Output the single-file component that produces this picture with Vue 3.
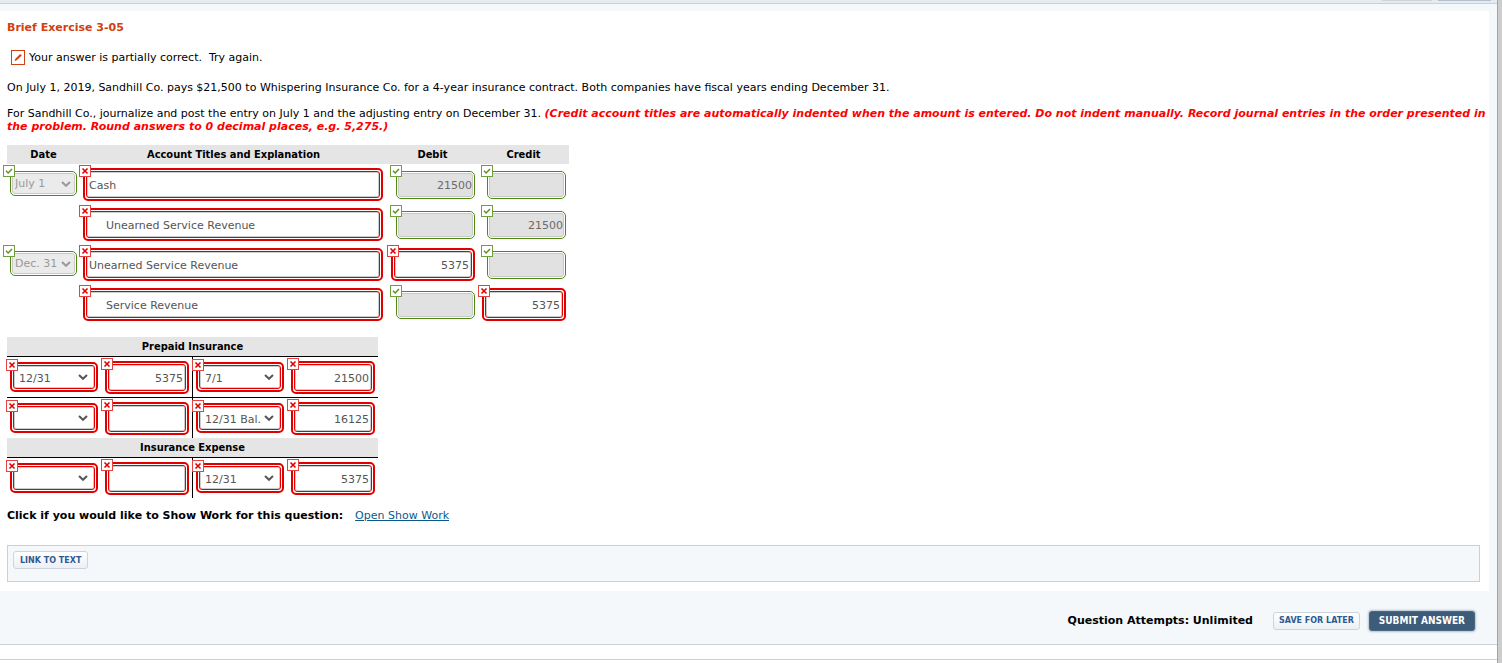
<script setup>
import { h } from 'vue'

const journal = [
  {
    date: 'July 1',
    title: { value: 'Cash' },
    debit: { value: '21500', ok: true },
    credit: { value: '', ok: true },
  },
  {
    title: { value: 'Unearned Service Revenue', indent: true },
    debit: { value: '', ok: true },
    credit: { value: '21500', ok: true },
  },
  {
    date: 'Dec. 31',
    title: { value: 'Unearned Service Revenue' },
    debit: { value: '5375', ok: false },
    credit: { value: '', ok: true },
  },
  {
    title: { value: 'Service Revenue', indent: true },
    debit: { value: '', ok: true },
    credit: { value: '5375', ok: false },
  },
]

const accounts = [
  {
    name: 'Prepaid Insurance',
    rows: [
      ['12/31', '5375', '7/1', '21500'],
      ['', '', '12/31 Bal.', '16125'],
    ],
  },
  { name: 'Insurance Expense', rows: [['', '', '12/31', '5375']] },
]

const columns = ['Debit date', 'Debit amount', 'Credit date', 'Credit amount']

const Mark = (props) =>
  h('svg', { class: 'mark', viewBox: '0 0 12 12', 'aria-hidden': 'true' }, [
    h('rect', { x: 0.5, y: 0.5, width: 11, height: 11, fill: '#fff', stroke: props.ok ? '#6fa03c' : '#e8413f' }),
    props.ok
      ? h('path', { d: 'M3 5.8 5.2 8 9 4', fill: 'none', stroke: '#5b9420', 'stroke-width': 1.5 })
      : h('path', { d: 'M3.5 3.5 8.5 8.5M8.5 3.5 3.5 8.5', fill: 'none', stroke: '#e00000', 'stroke-width': 1.6 }),
  ])
Mark.props = { ok: Boolean }

const Chevron = () =>
  h('svg', { class: 'chevron', viewBox: '0 0 10 6', 'aria-hidden': 'true' }, [
    h('path', { d: 'M1 1 5 4.8 9 1', fill: 'none', stroke: 'currentColor', 'stroke-width': 2 }),
  ])
</script>

<template>
  <div class="page">
    <div class="body">
      <div class="strip"><span class="tab"></span><span class="tab dark"></span></div>
      <main class="frame">
        <section class="panel">
          <h1>Brief Exercise 3-05</h1>
          <p class="status">
            <svg class="pencil" viewBox="0 0 14 15" aria-hidden="true">
              <rect x="0.5" y="0.5" width="13" height="14" fill="#fff" stroke="#d14010" />
              <path d="M3.6 11 4.2 9 9.2 4 10.8 5.4 5.7 10.3Z" fill="#d14010" />
            </svg>
            <span>Your answer is partially correct.&nbsp; Try again.</span>
          </p>
          <p class="intro">On July 1, 2019, Sandhill Co. pays $21,500 to Whispering Insurance Co. for a 4-year insurance contract. Both companies have fiscal years ending December 31.</p>
          <p class="task">For Sandhill Co., journalize and post the entry on July 1 and the adjusting entry on December 31. <em>(Credit account titles are automatically indented when the amount is entered. Do not indent manually. Record journal entries in the order presented in the problem. Round answers to 0 decimal places, e.g. 5,275.)</em></p>

          <table class="journal">
            <colgroup><col class="c-date" /><col class="c-title" /><col class="c-amt" /><col class="c-amt" /></colgroup>
            <thead>
              <tr><th>Date</th><th>Account Titles and Explanation</th><th>Debit</th><th>Credit</th></tr>
            </thead>
            <tbody>
              <tr v-for="(row, i) in journal" :key="i">
                <td>
                  <span v-if="row.date" class="field ok pick">
                    <select disabled :aria-label="`Date, line ${i + 1}`"><option>{{ row.date }}</option></select>
                    <Chevron />
                    <Mark :ok="true" />
                  </span>
                </td>
                <td>
                  <span class="field bad" :class="{ indent: row.title.indent }">
                    <input type="text" :value="row.title.value" :aria-label="`Account title, line ${i + 1}`" />
                    <Mark />
                  </span>
                </td>
                <td v-for="side in ['debit', 'credit']" :key="side">
                  <span class="field amount" :class="row[side].ok ? 'ok' : 'bad'">
                    <input type="text" :value="row[side].value" :disabled="row[side].ok" :aria-label="`${side}, line ${i + 1}`" />
                    <Mark :ok="row[side].ok" />
                  </span>
                </td>
              </tr>
            </tbody>
          </table>

          <table class="ledger">
            <colgroup><col class="l-date" /><col class="l-left" /><col class="l-date" /><col class="l-right" /></colgroup>
            <tbody v-for="acc in accounts" :key="acc.name">
              <tr><th colspan="4">{{ acc.name }}</th></tr>
              <tr v-for="(row, r) in acc.rows" :key="r">
                <td v-for="(cell, c) in row" :key="c">
                  <span class="field bad" :class="c % 2 ? 'amount' : 'pick'">
                    <input v-if="c % 2" type="text" :value="cell" :aria-label="`${acc.name}, ${columns[c]}, line ${r + 1}`" />
                    <template v-else>
                      <select :aria-label="`${acc.name}, ${columns[c]}, line ${r + 1}`"><option>{{ cell }}</option></select>
                      <Chevron />
                    </template>
                    <Mark />
                  </span>
                </td>
              </tr>
            </tbody>
          </table>

          <p class="work"><strong>Click if you would like to Show Work for this question:</strong><a href="#">Open Show Work</a></p>

          <div class="links"><button type="button" class="btn">LINK TO TEXT</button></div>
        </section>
        <footer class="actions">
          <strong>Question Attempts: Unlimited</strong>
          <button type="button" class="btn save">SAVE FOR LATER</button>
          <button type="button" class="btn submit">SUBMIT ANSWER</button>
        </footer>
      </main>
      <div class="below"></div>
    </div>
    <div class="edge"></div>
  </div>
</template>

<style>
body {
  margin: 0;
  background: #fff;
}
</style>

<style scoped>
.page {
  display: flex;
  min-height: 100vh;
  font: 11px/13px Verdana, "DejaVu Sans", sans-serif;
  color: #000;
}
.page :deep(*) {
  box-sizing: border-box;
}
.body {
  flex: 1;
  min-width: 0;
}
.edge {
  width: 5px;
  background: #cdcdcd;
  border-left: 1px solid #a3a3a3;
}
.strip {
  height: 4px;
  background: #e6ebf0;
  border-bottom: 1px solid #c8d0da;
  display: flex;
  justify-content: flex-end;
  gap: 6px;
  padding-right: 6px;
}
.tab {
  width: 50px;
  height: 1px;
  background: #ccd3dc;
}
.tab.dark {
  width: 53px;
  background: #b3c1cf;
}
.frame {
  background: #f4f8fb;
  border-bottom: 1px solid #c8d0da;
  padding-top: 7px;
}
.panel {
  background: #fff;
  margin-right: 8px;
  padding: 10px 0 9px 7px;
}
h1 {
  margin: 0 0 15px;
  font-size: 11px;
  line-height: 13px;
  color: #d14010;
}
p {
  margin: 0;
}
.status {
  display: flex;
  align-items: center;
  gap: 4px;
  height: 16px;
  margin: 0 0 16px 4px;
}
.pencil {
  width: 14px;
  height: 15px;
}
.intro {
  margin-bottom: 13px;
}
.task {
  margin-bottom: 12px;
}
.task em {
  font-weight: bold;
  color: #f00;
}
table {
  table-layout: fixed;
  border-collapse: separate;
  border-spacing: 0;
}
.journal {
  width: 562px;
  margin-bottom: 13px;
}
.c-date { width: 73px; }
.c-title { width: 307px; }
.c-amt { width: 91px; }
th {
  height: 19px;
  padding: 0;
  background: #e5e5e5;
  font: bold 11px/13px Tahoma, "DejaVu Sans Condensed", "DejaVu Sans", sans-serif;
  text-align: center;
}
td {
  height: 40px;
  padding: 4px 3px 3px;
  vertical-align: top;
}
.field {
  display: block;
  position: relative;
  background: #fff;
}
.field.bad {
  height: 33px;
  padding: 1px;
  border: 2px solid #e00000;
  border-radius: 5px;
}
.field.ok {
  height: 28px;
  margin-top: 3px;
  padding: 1px;
  border: 1px solid #4f8a10;
  border-radius: 5px;
}
.journal td:nth-child(2) .field {
  width: 300px;
}
.field.amount.bad {
  width: 84px;
  margin-left: auto;
}
.field.amount.ok {
  width: 79px;
  margin-left: auto;
}
.field.pick.ok {
  height: 25px;
}
.field.pick.bad {
  width: 88px;
  height: 30px;
  margin-top: 1px;
}
input,
select {
  display: block;
  width: 100%;
  height: 100%;
  margin: 0;
  padding: 0 2px;
  font: inherit;
  color: #555;
  background: #fff;
  border: 1px solid #c9c9c9;
  border-radius: 3px;
  appearance: none;
  opacity: 1;
}
.bad input,
.bad select {
  border-color: #e00000;
  box-shadow: inset 0 0 0 1px #ccc;
}
.bad input {
  padding: 2px 2px 0;
}
.amount input {
  text-align: right;
}
.amount.ok input {
  background: #e1e1e1;
  color: #6a6a6a;
  padding-right: 0;
}
.indent input {
  padding-left: 19px;
}
.bad select {
  padding: 2px 0 0 5px;
}
.ok select {
  background: #ebebeb;
  color: #999;
}
.field :deep(.chevron) {
  position: absolute;
  right: 8px;
  top: 50%;
  width: 10px;
  height: 6px;
  margin-top: -3px;
  color: #555;
  pointer-events: none;
}
.ok :deep(.chevron) {
  right: 5px;
  color: #999;
}
.field :deep(.mark) {
  position: absolute;
  left: -6px;
  top: -5px;
  width: 12px;
  height: 12px;
}
.ok :deep(.mark) {
  left: -7px;
  top: -7px;
}
.ok.pick :deep(.mark) {
  left: -8px;
}
.ledger {
  width: 371px;
}
.l-date { width: 95px; }
.l-left { width: 91px; }
.l-right { width: 90px; }
.ledger td {
  height: 41px;
  border-top: 1px solid #000;
}
.ledger td:nth-child(2) {
  border-right: 1px solid #000;
}
.work {
  margin: 11px 0 23px;
  display: flex;
  gap: 12px;
}
.work a {
  color: #0b5a8c;
}
.links {
  height: 37px;
  margin-right: 9px;
  padding: 5px;
  background: #f4f8fb;
  border: 1px solid #c8d0da;
}
.btn {
  display: block;
  height: 18px;
  padding: 1px 6px 0;
  font: bold 8px/14px Verdana, "DejaVu Sans", sans-serif;
  color: #2c5a92;
  background: linear-gradient(#fff, #eceff4);
  border: 1px solid #cdd4de;
  border-radius: 3px;
  white-space: nowrap;
}
.actions {
  display: flex;
  align-items: center;
  justify-content: flex-end;
  height: 53px;
  padding: 6px 22px 0 0;
}
.save {
  margin: 0 9px 0 20px;
  padding: 1px 5px 0;
}
.submit {
  height: 20px;
  padding: 0 9px;
  font: bold 10px/16px Tahoma, "DejaVu Sans Condensed", "DejaVu Sans", sans-serif;
  color: #fff;
  background: #3d5c7a;
  border-color: #4b6883;
  box-shadow: 0 0 2px 1px #b3c1cf;
}
.below {
  height: 15px;
  border-bottom: 1px solid #c8d0da;
}
</style>
